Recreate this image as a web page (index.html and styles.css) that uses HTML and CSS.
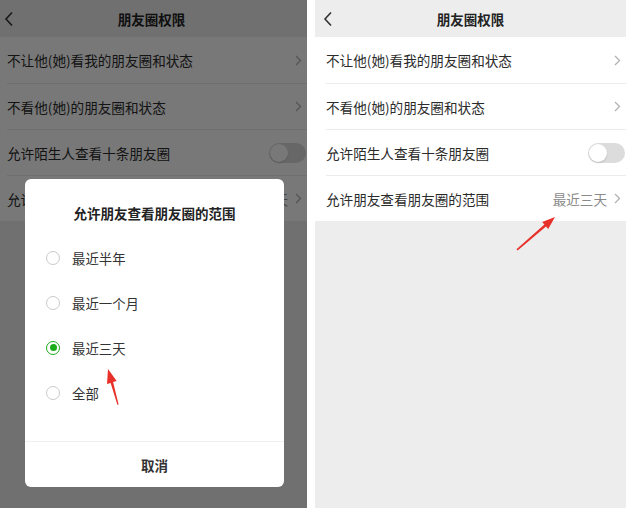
FILE: index.html
```html
<!DOCTYPE html>
<html lang="zh-CN">
<head>
    <meta charset="UTF-8">
    <meta name="viewport" content="width=device-width, initial-scale=1.0">
    <title>朋友圈权限</title>
    <link rel="stylesheet" href="styles.css">
</head>
<body>
    <!-- left screen: range picker open -->
    <div class="phone phone-left">
        <div class="header">
            <svg class="back" width="10" height="16" viewBox="0 0 10 16"><path d="M8 1.5 L2 8 L8 14.5" fill="none" stroke="#333" stroke-width="1.6"/></svg>
            <div class="title">朋友圈权限</div>
            <div></div>
        </div>
        <div class="list">
            <div class="row"><span class="label">不让他(她)看我的朋友圈和状态</span><svg class="chev" width="7" height="11" viewBox="0 0 7 11"><path d="M1 1 L5.5 5.5 L1 10" fill="none" stroke="#b2b2b2" stroke-width="1.3"/></svg></div>
            <div class="row"><span class="label">不看他(她)的朋友圈和状态</span><svg class="chev" width="7" height="11" viewBox="0 0 7 11"><path d="M1 1 L5.5 5.5 L1 10" fill="none" stroke="#b2b2b2" stroke-width="1.3"/></svg></div>
            <div class="row"><span class="label">允许陌生人查看十条朋友圈</span><span class="switch"></span></div>
            <div class="row"><span class="label">允许朋友查看朋友圈的范围</span><span class="value">最近三天</span><svg class="chev" width="7" height="11" viewBox="0 0 7 11"><path d="M1 1 L5.5 5.5 L1 10" fill="none" stroke="#b2b2b2" stroke-width="1.3"/></svg></div>
        </div>

        <div class="mask">
            <div class="dialog">
                <div class="dialog-title">允许朋友查看朋友圈的范围</div>
                <div class="options">
                    <div class="option"><span class="radio"></span>最近半年</div>
                    <div class="option"><span class="radio"></span>最近一个月</div>
                    <div class="option"><span class="radio checked"></span>最近三天</div>
                    <div class="option"><span class="radio"></span>全部</div>
                </div>
                <div class="dialog-footer">取消</div>
            </div>
        </div>

        <svg class="arrow arrow-left" width="22" height="42" viewBox="0 0 22 42"><polygon points="8,3 16.7,15.1 13.1,16.1 18.6,38.5 17.4,38.7 10.6,16.9 7,17.9" fill="#e8302a"/></svg>
    </div>

    <!-- right screen: result -->
    <div class="phone">
        <div class="header">
            <svg class="back" width="10" height="16" viewBox="0 0 10 16"><path d="M8 1.5 L2 8 L8 14.5" fill="none" stroke="#333" stroke-width="1.6"/></svg>
            <div class="title">朋友圈权限</div>
            <div></div>
        </div>
        <div class="list">
            <div class="row"><span class="label">不让他(她)看我的朋友圈和状态</span><svg class="chev" width="7" height="11" viewBox="0 0 7 11"><path d="M1 1 L5.5 5.5 L1 10" fill="none" stroke="#b2b2b2" stroke-width="1.3"/></svg></div>
            <div class="row"><span class="label">不看他(她)的朋友圈和状态</span><svg class="chev" width="7" height="11" viewBox="0 0 7 11"><path d="M1 1 L5.5 5.5 L1 10" fill="none" stroke="#b2b2b2" stroke-width="1.3"/></svg></div>
            <div class="row"><span class="label">允许陌生人查看十条朋友圈</span><span class="switch"></span></div>
            <div class="row"><span class="label">允许朋友查看朋友圈的范围</span><span class="value">最近三天</span><svg class="chev" width="7" height="11" viewBox="0 0 7 11"><path d="M1 1 L5.5 5.5 L1 10" fill="none" stroke="#b2b2b2" stroke-width="1.3"/></svg></div>
        </div>

        <svg class="arrow arrow-right" width="43" height="38" viewBox="0 0 43 38"><polygon points="1.5,35.3 29.4,10.4 27.2,8 40,3 33.2,14.9 31,12.6 2.6,36.6" fill="#e8302a"/></svg>
    </div>
</body>
</html>
```

FILE: styles.css
```css
body {
    margin: 0;
    width: 626px;
    height: 508px;
    overflow: hidden;
    background-color: #ffffff;
    display: flex;
    gap: 8px;
    font-family: "Noto Sans CJK SC", "Noto Sans", sans-serif;
    color: #333;
}
.phone {
    position: relative;
    width: 311px;
    height: 508px;
    flex-shrink: 0;
    overflow: hidden;
    background-color: #ededed;
}
.phone-left {
    margin-left: -4px;
}
.header {
    height: 37px;
    display: grid;
    grid-template-columns: 40px 1fr 40px;
    align-items: center;
    background-color: #ededed;
}
.back {
    margin-left: 8px;
}
.title {
    text-align: center;
    font-size: 13.5px;
    font-weight: bold;
    color: #222;
}
.list {
    background-color: #fff;
    padding-left: 11px;
}
.row {
    box-sizing: border-box;
    height: 46px;
    display: flex;
    align-items: center;
    padding-right: 5px;
    font-size: 13.6px;
    color: #2b2b2b;
}
.row + .row {
    border-top: 1px solid #ececec;
}
.label {
    flex: 1;
}
.value {
    color: #8a8a8a;
    margin-right: 7px;
}
.switch {
    position: relative;
    width: 37px;
    height: 20px;
    margin-right: -4px;
    border-radius: 10px;
    background-color: #dcdcdc;
}
.switch::after {
    content: "";
    position: absolute;
    left: 1px;
    top: 1px;
    width: 18px;
    height: 18px;
    border-radius: 50%;
    background-color: #fff;
    box-shadow: 0 1px 2px rgba(0,0,0,0.15);
}
.mask {
    position: absolute;
    inset: 0;
    background-color: rgba(0,0,0,0.53);
    padding: 179px 0 0 29px;
}
.dialog {
    width: 259px;
    height: 308px;
    background-color: #fff;
    border-radius: 6px;
    display: flex;
    flex-direction: column;
}
.dialog-title {
    padding-top: 24px;
    line-height: 20px;
    text-align: center;
    font-size: 13.5px;
    font-weight: bold;
    color: #222;
}
.options {
    margin-top: 12px;
    flex: 1;
}
.option {
    height: 45px;
    display: flex;
    align-items: center;
    padding-left: 21px;
    font-size: 13.4px;
    color: #333;
}
.radio {
    box-sizing: border-box;
    width: 14px;
    height: 14px;
    margin-right: 12px;
    border: 1px solid #c9c9c9;
    border-radius: 50%;
    display: flex;
    align-items: center;
    justify-content: center;
}
.radio.checked {
    border: 1.5px solid #1aad19;
}
.radio.checked::after {
    content: "";
    width: 7px;
    height: 7px;
    border-radius: 50%;
    background-color: #1aad19;
}
.dialog-footer {
    height: 45px;
    border-top: 1px solid #efefef;
    display: flex;
    align-items: center;
    justify-content: center;
    font-size: 13.5px;
    font-weight: bold;
    color: #333;
}
.arrow {
    position: absolute;
}
.arrow-left {
    left: 104px;
    top: 366px;
}
.arrow-right {
    left: 200px;
    top: 214px;
}
```
